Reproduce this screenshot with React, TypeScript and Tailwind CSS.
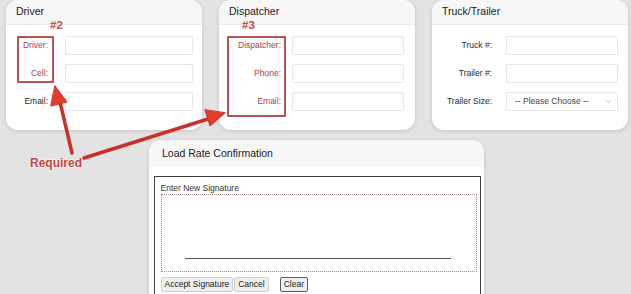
import { ChevronDown } from 'lucide-react';

const font = { fontFamily: '"Liberation Sans", Arial, sans-serif' };

type Row = { label: string; red?: boolean; select?: boolean };

const Field = ({ row, labelW, inputW, gap }: { row: Row; labelW: string; inputW: string; gap: string }) => (
  <div className={`flex items-center ${gap}`}>
    <span
      className={`${labelW} text-right text-[8.5px] leading-none ${row.red ? 'text-[#a0454a]' : 'text-[#2a2a2a]'}`}
    >
      {row.label}
    </span>
    {row.select ? (
      <div
        className={`${inputW} h-[19px] bg-white border border-[#e6e6e6] rounded-[2px] flex items-center justify-between pl-[8px] pr-[4px] text-[8.5px] text-[#444]`}
      >
        <span>-- Please Choose --</span>
        <ChevronDown className="w-[9px] h-[9px] text-[#999]" strokeWidth={1.5} />
      </div>
    ) : (
      <div className={`${inputW} h-[19px] bg-white border border-[#e6e6e6] rounded-[2px]`} />
    )}
  </div>
);

const Card = ({
  title,
  rows,
  labelW,
  inputW,
  gap,
  children,
}: {
  title: string;
  rows: Row[];
  labelW: string;
  inputW: string;
  gap: string;
  children?: React.ReactNode;
}) => (
  <div className="relative w-[196px] h-[130px] bg-white rounded-[12px] shadow-[0_1px_4px_rgba(0,0,0,0.14)]">
    <div className="h-[25px] px-[10px] flex items-center bg-[#f7f7f7] border-b border-[#ececec] rounded-t-[12px] text-[10.5px] text-[#1a1a1a]">
      {title}
    </div>
    <div className="flex flex-col gap-[9px] pt-[11px]">
      {rows.map((r) => (
        <Field key={r.label} row={r} labelW={labelW} inputW={inputW} gap={gap} />
      ))}
    </div>
    {children}
  </div>
);

export default function App() {
  return (
    <div className="relative w-[631px] h-[294px] overflow-hidden bg-[#e3e3e3]" style={font}>
      <div className="flex pl-[6px] gap-[17px]">
        <Card
          title="Driver"
          rows={[{ label: 'Driver:', red: true }, { label: 'Cell:', red: true }, { label: 'Email:' }]}
          labelW="w-[42px]"
          inputW="w-[128px]"
          gap="gap-[17px]"
        >
          <div className="absolute left-[11px] top-[36px] w-[37px] h-[47px] border-2 border-[#b9534f] rounded-[1px]" />
          <span className="absolute left-[44px] top-[17px] text-[11.5px] font-bold text-[#c44a40] [text-shadow:0_0_2px_#fff]">
            #2
          </span>
        </Card>
        <Card
          title="Dispatcher"
          rows={[
            { label: 'Dispatcher:', red: true },
            { label: 'Phone:', red: true },
            { label: 'Email:', red: true },
          ]}
          labelW="w-[62px]"
          inputW="w-[112px]"
          gap="gap-[11px]"
        >
          <div className="absolute left-[8px] top-[36px] w-[59px] h-[81px] border-2 border-[#b9534f] rounded-[1px]" />
          <span className="absolute left-[23px] top-[17px] text-[11.5px] font-bold text-[#c44a40] [text-shadow:0_0_2px_#fff]">
            #3
          </span>
        </Card>
        <Card
          title="Truck/Trailer"
          rows={[{ label: 'Truck #:' }, { label: 'Trailer #:' }, { label: 'Trailer Size:', select: true }]}
          labelW="w-[60px]"
          inputW="w-[112px]"
          gap="gap-[14px]"
        />
      </div>

      <div className="ml-[149px] mt-[10px] w-[335px] h-[200px] bg-white rounded-t-[12px] shadow-[0_1px_4px_rgba(0,0,0,0.14)]">
        <div className="h-[27px] px-[13px] flex items-center bg-[#f7f7f7] rounded-t-[12px] text-[10.5px] text-[#1a1a1a]">
          Load Rate Confirmation
        </div>
        <div className="pt-[9px] pl-[5px] pr-[3px]">
          <div className="border-[1.5px] border-[#3f3f3f] h-[160px] pl-[5.5px] pr-[3.5px] pt-[4.5px]">
            <div className="text-[8.5px] text-[#333] leading-[12px]">Enter New Signature</div>
            <div className="h-[78px] border border-dotted border-[#a98582] pt-[63px] pl-[23px] pr-[25px]">
              <div className="h-px bg-[#555]" />
            </div>
            <div className="flex items-center mt-[5px] text-[8.5px] text-[#222]">
              <button className="h-[15px] px-[3px] bg-[#efefef] border border-[#cfcfcf] rounded-[2px]">
                Accept Signature
              </button>
              <button className="ml-px h-[15px] px-[3px] bg-[#efefef] border border-[#cfcfcf] rounded-[2px]">
                Cancel
              </button>
              <button className="ml-[11px] h-[15px] px-[3px] bg-[#efefef] border border-[#5a5a5a] rounded-[2px]">
                Clear
              </button>
            </div>
          </div>
        </div>
      </div>

      <span className="absolute left-[30px] top-[154px] text-[12px] font-bold text-[#c2453c] [text-shadow:0_0_2px_#fff,0_0_2px_#fff]">
        Required
      </span>
      <svg className="absolute inset-0 pointer-events-none" width="631" height="294" viewBox="0 0 631 294">
        <g fill="#e23a2c" stroke="#c9302a" strokeLinecap="round">
          <line x1="72" y1="153" x2="60" y2="102" strokeWidth="3.5" />
          <polygon points="55,86 67,102 51,106" strokeWidth="1" strokeLinejoin="round" />
          <line x1="84" y1="158" x2="208" y2="119" strokeWidth="3.5" />
          <polygon points="225,113 210,126 205,110" strokeWidth="1" strokeLinejoin="round" />
        </g>
      </svg>
    </div>
  );
}
